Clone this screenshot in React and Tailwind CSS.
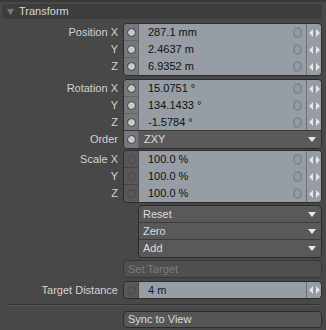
import React from "react";

// Transform panel rows
const groups = [
  {
    rows: [
      { label: "Position X", value: "287.1 mm" },
      { label: "Y", value: "2.4637 m" },
      { label: "Z", value: "6.9352 m" },
    ],
  },
  {
    rows: [
      { label: "Rotation X", value: "15.0751 °" },
      { label: "Y", value: "134.1433 °" },
      { label: "Z", value: "-1.5784 °" },
      { label: "Order", value: "ZXY", order: true },
    ],
  },
  {
    dim: true,
    rows: [
      { label: "Scale X", value: "100.0 %" },
      { label: "Y", value: "100.0 %" },
      { label: "Z", value: "100.0 %" },
    ],
  },
];

function Circle({ dim, line }) {
  return (
    <div className={`w-[15px] shrink-0 flex items-center justify-center border-r ${line ? "border-b" : ""} ${dim ? "bg-[#585858] border-[#454545]" : "bg-[#75797e] border-[#5f6367]"}`}>
      <span className={`w-[9px] h-[9px] rounded-full border ${dim ? "bg-[#575757] border-[#474747]" : "bg-[#c9c9c9] border-[#3c3c3c]"}`}></span>
    </div>
  );
}

function Arrows() {
  return (
    <div className="w-[15px] shrink-0 flex items-center justify-center border-l border-[#6c7278]">
      <svg width="11" height="10" viewBox="0 0 11 10">
        <polygon points="0,5 4,1 4,9" fill="#e2e6ea" />
        <rect x="5" y="0" width="1" height="10" fill="#8a9096" />
        <polygon points="7,1 11,5 7,9" fill="#e2e6ea" />
      </svg>
    </div>
  );
}

function DropArrow() {
  return (
    <svg width="8" height="5" viewBox="0 0 8 5" className="mr-[5px]">
      <polygon points="0,0 8,0 4,5" fill="#e8e8e8" />
    </svg>
  );
}

function Zero() {
  return <span className="w-[9px] h-[11px] rounded-full border-2 border-[#81888f] mr-[4px]"></span>;
}

function Group({ rows, dim, className }) {
  return (
    <div className={`flex ${className}`}>
      <div className="w-[123px] pt-[1px]">
        {rows.map((r, i) => (
          <div key={i} className="h-[17px] flex items-center justify-end pr-[5px] text-[#d2d2d2]">{r.label}</div>
        ))}
      </div>
      <div className="w-[199px] border border-[#2c2c2c] rounded-[4px] overflow-hidden">
        {rows.map((r, i) => {
          const beforeOrder = rows[i + 1] && rows[i + 1].order;
          return (
            <div key={i} className={`h-[17px] flex ${beforeOrder ? "border-b border-[#3a3a3a]" : ""}`}>
              <Circle dim={dim} line={i < rows.length - 1 && !beforeOrder} />
              {r.order ? (
                <div className="flex-1 flex items-center justify-between bg-[#5a5a5a] text-[#dcdcdc] pl-[5px]">
                  <span>{r.value}</span>
                  <DropArrow />
                </div>
              ) : (
                <>
                  <div className="flex-1 flex items-center justify-between bg-[#969da5] text-[#111] pl-[9px]">
                    <span>{r.value}</span>
                    <Zero />
                  </div>
                  <div className="bg-[#969da5] flex">
                    <Arrows />
                  </div>
                </>
              )}
            </div>
          );
        })}
      </div>
    </div>
  );
}

export default function App() {
  return (
    <div className="w-[326px] h-[330px] bg-[#484848] overflow-hidden text-[11px] leading-none" style={{ fontFamily: "'Liberation Sans', Arial, sans-serif" }}>
      <div className="h-[2px] bg-[#3a3a3a]"></div>
      {/* Header */}
      <div className="mt-[2px] ml-[2px] mr-[4px] h-[15px] rounded-[4px] bg-[#3d3d3d] flex items-center">
        <svg width="7" height="6" viewBox="0 0 7 6" className="ml-[5px] mr-[5px]">
          <polygon points="0,0 7,0 3.5,6" fill="#7a7a7a" />
        </svg>
        <span className="text-[#d6d6d6]">Transform</span>
      </div>

      <Group rows={groups[0].rows} className="mt-[4px]" />
      <Group rows={groups[1].rows} className="mt-[3px]" />
      <Group rows={groups[2].rows} dim className="mt-[1px]" />

      {/* Action buttons */}
      <div className="ml-[138px] mr-[4px] mt-[2px] border border-[#2c2c2c] rounded-[4px] overflow-hidden bg-[#595959] text-[#dcdcdc]">
        {["Reset", "Zero", "Add"].map((t, i) => (
          <div key={t} className={`h-[17px] flex items-center justify-between pl-[4px] ${i < 2 ? "border-b border-[#3c3c3c]" : ""}`}>
            <span>{t}</span>
            <DropArrow />
          </div>
        ))}
      </div>

      <div className="ml-[123px] mr-[4px] mt-[2px] h-[18px] border border-[#363636] rounded-[4px] bg-[#4f4f4f] text-[#7c7c7c] flex items-center pl-[4px]">
        Set Target
      </div>

      <div className="flex mt-[3px]">
        <div className="w-[123px] h-[18px] flex items-center justify-end pr-[5px] text-[#d2d2d2]">Target Distance</div>
        <div className="w-[199px] h-[18px] border border-[#2c2c2c] rounded-[4px] overflow-hidden flex">
          <Circle dim />
          <div className="flex-1 flex items-center bg-[#969da5] text-[#0c1a3a] pl-[9px]">4 m</div>
          <div className="bg-[#969da5] flex">
            <Arrows />
          </div>
        </div>
      </div>

      <div className="ml-[6px] mr-[4px] mt-[5px] border-t border-[#333333] border-b border-b-[#555555]"></div>

      <div className="ml-[123px] mr-[4px] mt-[5px] h-[17px] border border-[#2c2c2c] rounded-[4px] bg-[#565656] text-[#dcdcdc] flex items-center pl-[4px]">
        Sync to View
      </div>
    </div>
  );
}
